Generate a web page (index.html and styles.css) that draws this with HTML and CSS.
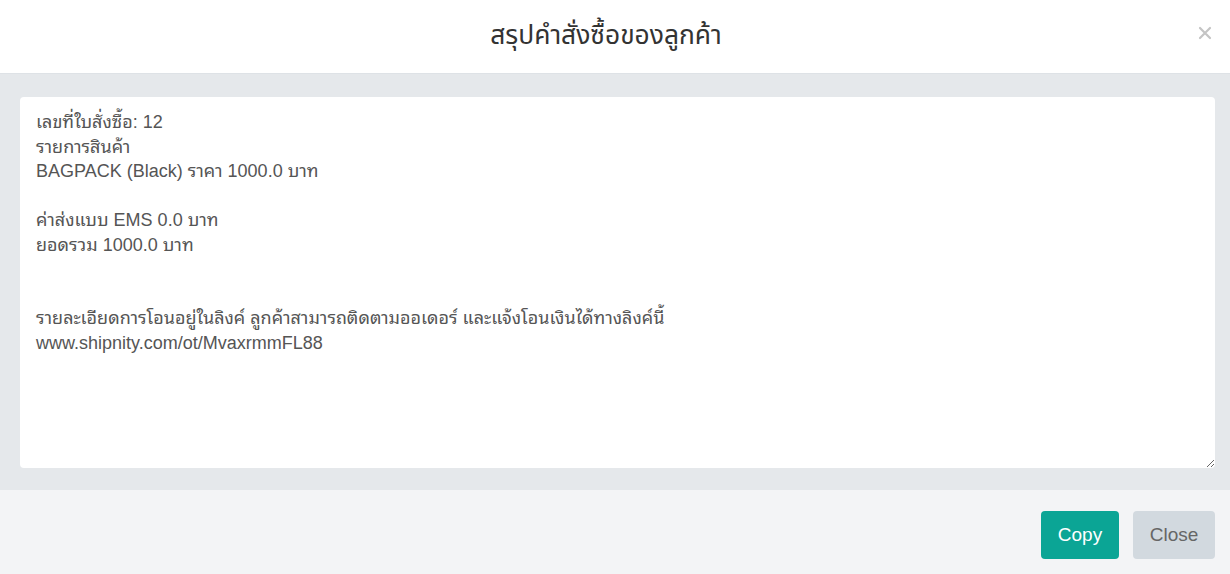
FILE: index.html
```html
<!DOCTYPE html>
<html lang="th">
<head>
<meta charset="utf-8">
<link rel="stylesheet" href="styles.css">
</head>
<body>
<div class="modal">
  <header class="modal-header">
    <h1 class="modal-title">สรุปคำสั่งซื้อของลูกค้า</h1>
    <button class="close-x" aria-label="close">
      <svg width="14" height="14" viewBox="0 0 14 14"><path d="M2 2L12 12M12 2L2 12" stroke="#c4c4c4" stroke-width="2.2" stroke-linecap="round"/></svg>
    </button>
  </header>
  <div class="modal-body">
    <textarea class="summary">เลขที่ใบสั่งซื้อ: 12
รายการสินค้า
BAGPACK (Black) ราคา 1000.0 บาท

ค่าส่งแบบ EMS 0.0 บาท
ยอดรวม 1000.0 บาท


รายละเอียดการโอนอยู่ในลิงค์ ลูกค้าสามารถติดตามออเดอร์ และแจ้งโอนเงินได้ทางลิงค์นี้
www.shipnity.com/ot/MvaxrmmFL88</textarea>
  </div>
  <footer class="modal-footer">
    <button class="btn btn-copy">Copy</button>
    <button class="btn btn-close">Close</button>
  </footer>
</div>
</body>
</html>
```
FILE: styles.css
```css
html, body {
  margin: 0;
  padding: 0;
  background: #ffffff;
}
.modal {
  width: 1230px;
  height: 574px;
  display: flex;
  flex-direction: column;
  font-family: "Liberation Sans", "Noto Sans Thai Looped", Arial, sans-serif;
}
.modal-header {
  height: 73px;
  border-bottom: 1px solid #dee2e6;
  display: flex;
  align-items: center;
  justify-content: center;
  position: relative;
  background: #fff;
  padding-right: 18px;
}
.modal-title {
  margin: 0;
  font-size: 26.4px;
  font-weight: 400;
  color: #333;
  font-family: "Noto Sans Thai", "Liberation Sans", sans-serif;
  padding-bottom: 2px;
}
.close-x {
  position: absolute;
  right: 18px;
  top: 26px;
  background: none;
  border: 0;
  padding: 0;
  width: 14px;
  height: 14px;
  display: flex;
}
.modal-body {
  flex: 1;
  background: #e5e8eb;
  padding: 23px 15px 22px 20px;
  display: flex;
}
.summary {
  flex: 1;
  margin: 0;
  border: 0;
  border-radius: 4px;
  background: #fff;
  padding: 13px 16px;
  font-family: "Liberation Sans", "Noto Sans Thai Looped", Arial, sans-serif;
  font-size: 18px;
  line-height: 24.5px;
  color: #555;
  resize: vertical;
  outline: none;
  overflow: hidden;
}
.modal-footer {
  height: 84px;
  background: #f3f4f6;
  display: flex;
  align-items: center;
  justify-content: flex-end;
  gap: 14px;
  padding-right: 15px;
  padding-top: 6px;
  box-sizing: border-box;
}
.btn {
  height: 48px;
  border: 0;
  border-radius: 4px;
  font-family: "Liberation Sans", Arial, sans-serif;
  font-size: 19px;
  padding: 0;
}
.btn-copy {
  background: #0ba595;
  color: #fff;
  width: 78px;
}
.btn-close {
  background: #d2d9df;
  color: #666;
  width: 82px;
}
```
